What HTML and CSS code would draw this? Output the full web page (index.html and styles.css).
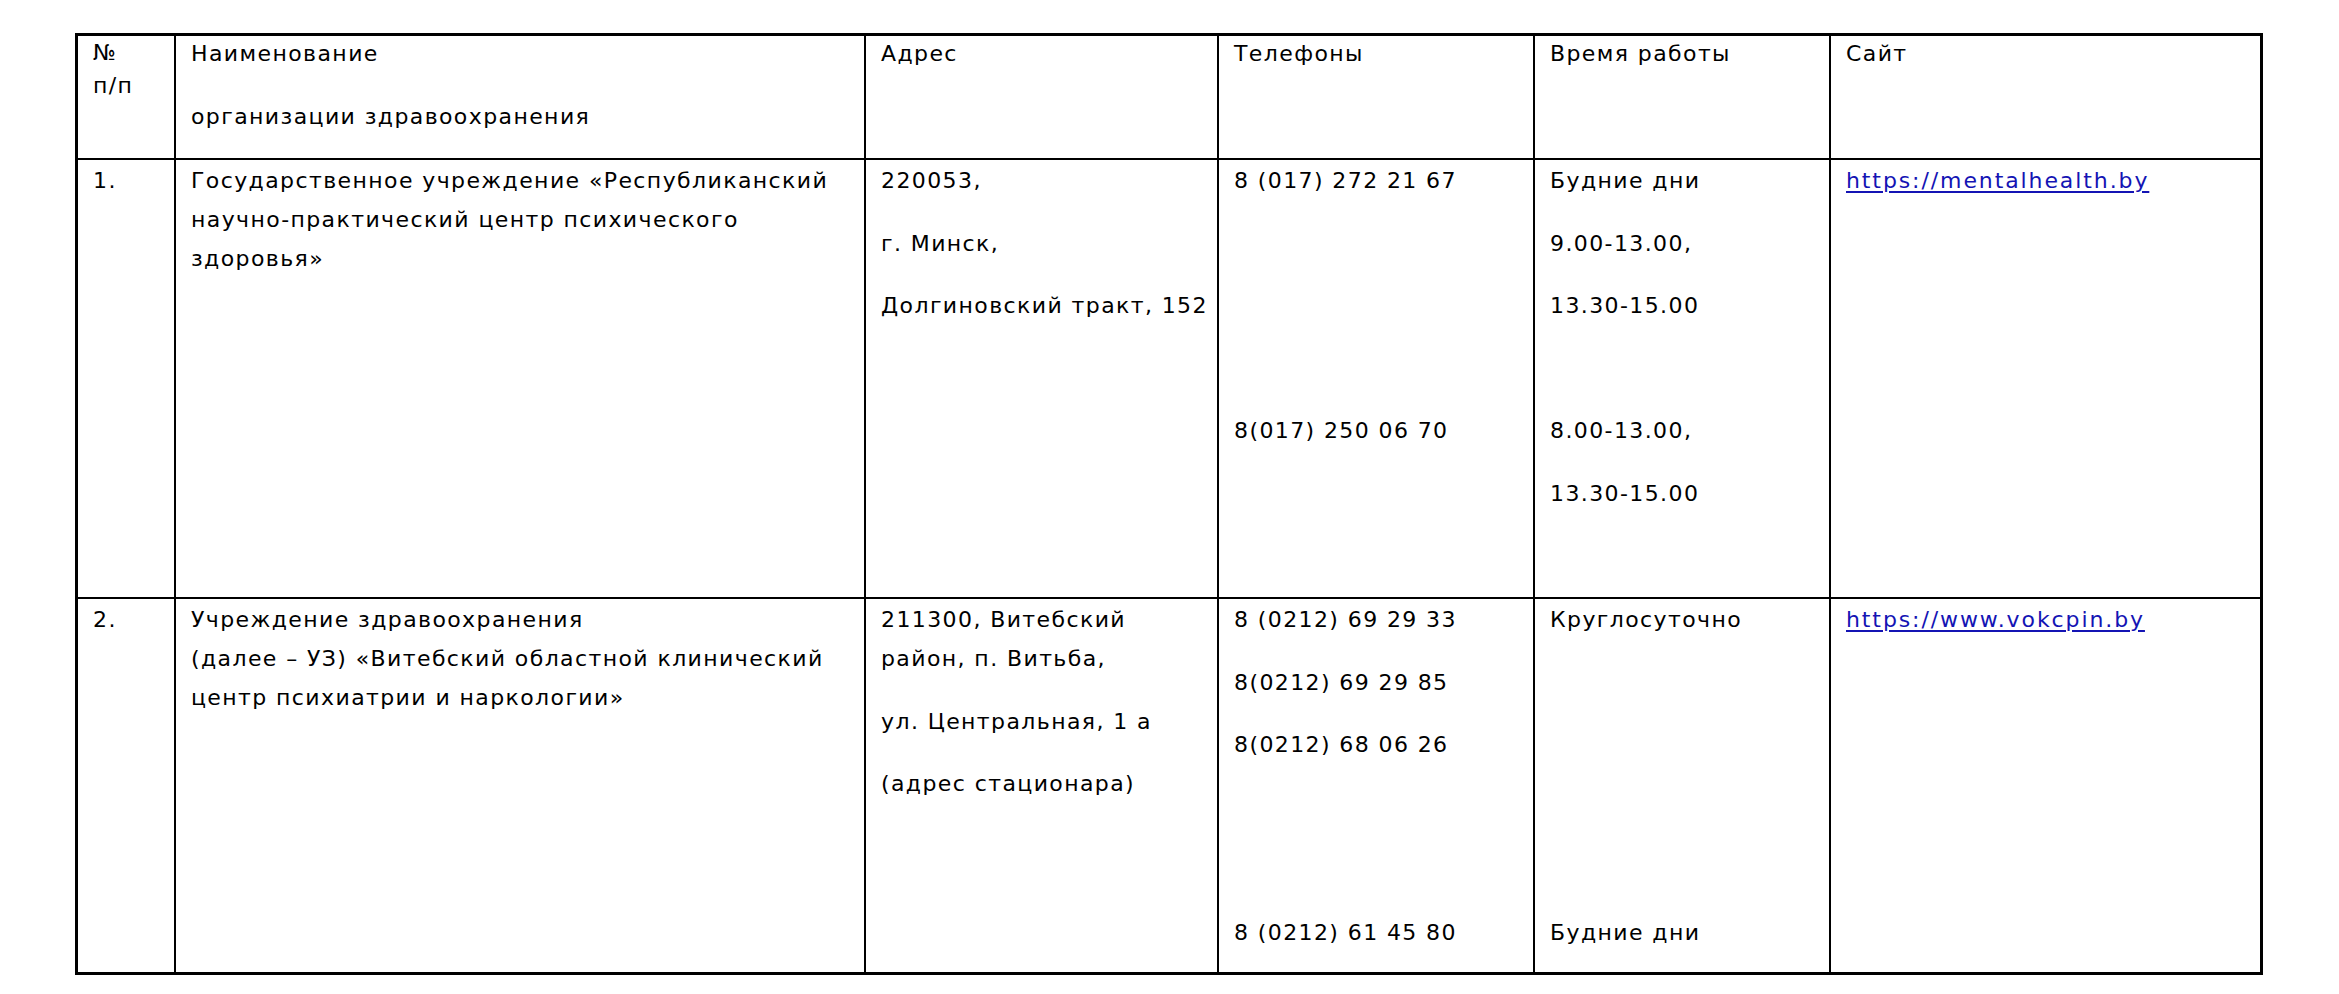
FILE: index.html
```html
<!DOCTYPE html>
<html lang="ru">
<head>
<meta charset="utf-8">
<title>Организации здравоохранения</title>
<link rel="stylesheet" href="styles.css">
</head>
<body>
<div class="table" role="table">
  <div class="row row-head" role="row">
    <div class="cell cell-head" role="columnheader"><p class="num-head">№<br>п/п</p></div>
    <div class="cell cell-head" role="columnheader"><p>Наименование</p><p>организации здравоохранения</p></div>
    <div class="cell cell-head" role="columnheader"><p>Адрес</p></div>
    <div class="cell cell-head" role="columnheader"><p>Телефоны</p></div>
    <div class="cell cell-head" role="columnheader"><p>Время работы</p></div>
    <div class="cell cell-head" role="columnheader"><p>Сайт</p></div>
  </div>
  <div class="row row-first" role="row">
    <div class="cell" role="cell"><p>1.</p></div>
    <div class="cell" role="cell"><p>Государственное учреждение «Республиканский научно-практический центр психического здоровья»</p></div>
    <div class="cell" role="cell"><p>220053,</p><p>г. Минск,</p><p>Долгиновский тракт, 152</p></div>
    <div class="cell" role="cell"><p>8 (017) 272 21 67</p><p></p><p></p><p></p><p>8(017) 250 06 70</p></div>
    <div class="cell" role="cell"><p>Будние дни</p><p>9.00-13.00,</p><p>13.30-15.00</p><p></p><p>8.00-13.00,</p><p>13.30-15.00</p></div>
    <div class="cell" role="cell"><p><a href="https://mentalhealth.by">https://mentalhealth.by</a></p></div>
  </div>
  <div class="row row-second" role="row">
    <div class="cell" role="cell"><p>2.</p></div>
    <div class="cell" role="cell"><p>Учреждение здравоохранения<br>(далее – УЗ) «Витебский областной клинический центр психиатрии и наркологии»</p></div>
    <div class="cell" role="cell"><p>211300, Витебский район, п. Витьба,</p><p>ул. Центральная, 1 а</p><p>(адрес стационара)</p></div>
    <div class="cell" role="cell"><p>8 (0212) 69 29 33</p><p>8(0212) 69 29 85</p><p>8(0212) 68 06 26</p><p></p><p></p><p>8 (0212) 61 45 80</p></div>
    <div class="cell" role="cell"><p>Круглосуточно</p><p></p><p></p><p></p><p></p><p>Будние дни</p></div>
    <div class="cell" role="cell"><p><a href="https://www.vokcpin.by">https://www.vokcpin.by</a></p></div>
  </div>
</div>
</body>
</html>
```
FILE: styles.css
```css
html, body {
  margin: 0;
  padding: 0;
  background: #ffffff;
}

body {
  font-family: "DejaVu Sans", "Open Sans", sans-serif;
  font-size: 22px;
  letter-spacing: 1.4px;
  color: #000000;
}

.table {
  display: flex;
  flex-direction: column;
  width: fit-content;
  margin: 33px 0 0 75px;
  border-top: 3px solid #000;
  border-left: 3px solid #000;
}

.row {
  display: grid;
  grid-template-columns: 98px 690px 353px 316px 296px 432px;
}

.row-head { height: 124px; }
.row-first { height: 439px; }
.row-second { height: 376px; }

.cell {
  box-sizing: border-box;
  padding: 1px 2px 0 15px;
  border-right: 2px solid #000;
  border-bottom: 2px solid #000;
  overflow: hidden;
}

.cell:last-child {
  border-right-width: 3px;
}

.row:last-child .cell {
  border-bottom-width: 3px;
}

.cell p {
  margin: 0 0 23.6px 0;
  line-height: 39px;
}

.cell-head {
  padding-top: 0;
}

.cell-head p {
  line-height: 35px;
  margin-bottom: 28px;
}

.cell-head .num-head {
  line-height: 33px;
}

.cell p:empty {
  min-height: 39px;
}

.cell a {
  color: #1414b4;
  letter-spacing: 1.9px;
  text-decoration: underline;
  text-decoration-thickness: 2px;
  text-underline-offset: 3px;
}
```
